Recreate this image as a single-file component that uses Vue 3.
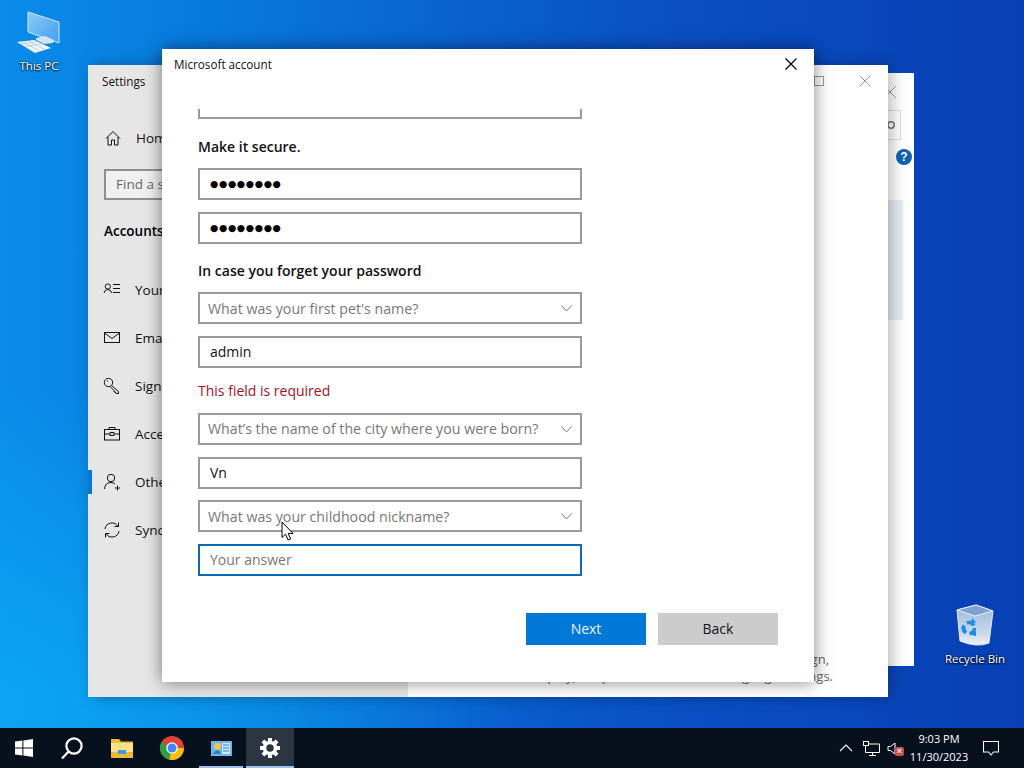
<script setup>
const navItems = [
  { label: 'Your info', icon: 'info' },
  { label: 'Email & accounts', icon: 'mail' },
  { label: 'Sign-in options', icon: 'key' },
  { label: 'Access work or school', icon: 'case' },
  { label: 'Other people', icon: 'people', active: true },
  { label: 'Sync your settings', icon: 'sync' }
]
const gearTeeth = [0, 45, 90, 135, 180, 225, 270, 315]
</script>

<template>
  <div class="desktop">
    <div class="desk-icon pc-icon">
      <svg width="48" height="44" viewBox="0 0 48 44">
        <defs>
          <linearGradient id="pcScreen" x1="0" y1="0" x2="1" y2="1">
            <stop offset="0" stop-color="#8ccbf8" />
            <stop offset="1" stop-color="#3f9fee" />
          </linearGradient>
        </defs>
        <path d="M13 1 L44 11 L44 32 L13 21 Z" fill="url(#pcScreen)" stroke="#cfe8fb" stroke-width="1" />
        <path d="M21 27 L30 25 L39 29 L38 32 L29 33 L21 29 Z" fill="#d5e3ef" />
        <path d="M2 31 L19 29 L36 37 L20 42 Z" fill="#f0f6fb" />
        <path d="M7 30.500 L24 39.500 M13 30 L30 38.500 M5 33 L22 31 M9 35.500 L26 33" stroke="#a9c6dc" stroke-width=".7" />
      </svg>
      <span>This PC</span>
    </div>
    <div class="desk-icon bin-icon">
      <svg width="40" height="44" viewBox="0 0 40 44">
        <defs>
          <linearGradient id="binBody" x1="0" y1="0" x2="0" y2="1">
            <stop offset="0" stop-color="#9db8da" />
            <stop offset=".7" stop-color="#c9d8e8" />
            <stop offset="1" stop-color="#f0f2f4" />
          </linearGradient>
        </defs>
        <path d="M2 6 L21 1 L38 7 L34 39 Q22 44 5 37 Z" fill="url(#binBody)" stroke="#dfeaf6" />
        <path d="M2 6 L21 1 L38 7 L20 12 Z" fill="#7ea2cf" stroke="#e6f0fa" />
        <circle cx="14" cy="24" r="5.500" fill="none" stroke="#1d8ce4" stroke-width="3.600" stroke-dasharray="8 3.500" />
        <path d="M17 14 L21 18 L16 20 Z M8 29 L6 23 L11 25 Z M21 27 L21 32 L16 31 Z" fill="#1d8ce4" />
      </svg>
      <span>Recycle Bin</span>
    </div>

    <section class="window back-window">
      <div class="back-close">
        <svg width="14" height="14" viewBox="0 0 14 14"><path d="M1 1 L13 13 M13 1 L1 13" stroke="#999" /></svg>
      </div>
      <div class="back-search">
        <svg width="10" height="10" viewBox="0 0 10 10" fill="none" stroke="#777" stroke-width="1.500"><circle cx="5" cy="5" r="3.200" /></svg>
      </div>
      <div class="help-badge">?</div>
      <div class="back-panel"></div>
    </section>

    <section class="window settings">
      <aside class="sidebar">
        <div class="app-title">Settings</div>
        <div class="home-row">
          <svg width="16" height="16" viewBox="0 0 16 16" fill="none" stroke="#111"><path d="M1 8.500 L8 1.500 L15 8.500 M3 7 V15 H6.500 V10 H9.500 V15 H13 V7" /></svg>
          <span>Home</span>
        </div>
        <div class="find-box">Find a setting</div>
        <div class="section-title">Accounts</div>
        <nav class="nav">
          <div v-for="item in navItems" :key="item.label" class="nav-item" :class="{ active: item.active }">
            <svg width="18" height="18" viewBox="0 0 18 18" fill="none" stroke="#111">
              <template v-if="item.icon === 'info'">
                <circle cx="4.800" cy="5.500" r="2.600" /><path d="M1 12 Q1.500 8.500 4.800 8.500 Q8 8.500 8.600 12 M10 3.500 H17 M10 7.500 H17 M10 11.500 H17" />
              </template>
              <template v-else-if="item.icon === 'mail'">
                <rect x="1.500" y="3.500" width="15" height="10" /><path d="M1.500 4 L9 9.500 L16.500 4" />
              </template>
              <template v-else-if="item.icon === 'key'">
                <circle cx="5.500" cy="5.500" r="4.200" /><path d="M8.500 8.500 L15.500 14.500 V16.500 H13 L12.500 15 H11 V13.500 L7.500 10 M4 4 H5" />
              </template>
              <template v-else-if="item.icon === 'case'">
                <rect x="1.500" y="4.500" width="15" height="10.500" /><path d="M6 4.500 V2.500 H12 V4.500 M1.500 9 H7 M11 9 H16.500 M7 7.500 H11 V10.500 H7 Z" />
              </template>
              <template v-else-if="item.icon === 'people'">
                <circle cx="8" cy="5" r="3.700" /><path d="M1.500 16 Q2 9.500 8 9.500 Q10.500 9.500 12 11 M12 15 H17 M14.500 12.500 V17.500" />
              </template>
              <template v-else>
                <path d="M2 8 A7 7 0 0 1 15 5.500 M16 10 A7 7 0 0 1 3 12.500 M15.500 1.500 V5.500 H11.500 M2.500 16.500 V12.500 H6.500" />
              </template>
            </svg>
            <span>{{ item.label }}</span>
          </div>
        </nav>
      </aside>
      <main class="settings-main">
        <div class="win-controls">
          <span class="max-box"></span>
          <svg width="12" height="12" viewBox="0 0 12 12"><path d="M.5 .5 L11.500 11.500 M11.500 .5 L.5 11.500" stroke="#999" /></svg>
        </div>
        <div class="main-note">
          <p class="note-first">Sign in with your Microsoft account to sync your design,</p>
          <p>Windows display, or specific browser and language settings.</p>
        </div>
      </main>
    </section>

    <section class="window dialog">
      <header class="dialog-head">
        <span>Microsoft account</span>
        <svg width="12" height="12" viewBox="0 0 12 12"><path d="M.5 .5 L11.500 11.500 M11.500 .5 L.5 11.500" stroke="#000" stroke-width="1.200" /></svg>
      </header>
      <div class="dialog-body">
        <div class="field clipped"></div>
        <h3 class="heading first">Make it secure.</h3>
        <div class="field dots">●●●●●●●●</div>
        <div class="field dots">●●●●●●●●</div>
        <h3 class="heading second">In case you forget your password</h3>
        <div class="field select">
          <span>What was your first pet's name?</span>
          <svg width="11" height="7" viewBox="0 0 11 7"><path d="M.5 .5 L5.500 6 L10.500 .5" fill="none" stroke="#777" /></svg>
        </div>
        <div class="field value">admin</div>
        <div class="error">This field is required</div>
        <div class="field select raised">
          <span>What’s the name of the city where you were born?</span>
          <svg width="11" height="7" viewBox="0 0 11 7"><path d="M.5 .5 L5.500 6 L10.500 .5" fill="none" stroke="#777" /></svg>
        </div>
        <div class="field value raised-value">Vn</div>
        <div class="field select tight">
          <span>What was your childhood nickname?</span>
          <svg width="11" height="7" viewBox="0 0 11 7"><path d="M.5 .5 L5.500 6 L10.500 .5" fill="none" stroke="#777" /></svg>
        </div>
        <div class="field focus">Your answer</div>
      </div>
      <footer class="dialog-foot">
        <button class="btn primary">Next</button>
        <button class="btn secondary">Back</button>
      </footer>
    </section>

    <svg class="cursor" width="14" height="21" viewBox="0 0 14 21">
      <path d="M1 1 V16.500 L4.600 13.200 L7 19 L9.600 18 L7.200 12.400 H12 Z" fill="#fff" stroke="#000" stroke-width="1" />
    </svg>

    <footer class="taskbar">
      <div class="task-left">
        <div class="task-btn">
          <svg width="18" height="18" viewBox="0 0 18 18" fill="#fff"><path d="M0 2.600 L7.400 1.600 V8.400 H0 Z M8.400 1.400 L18 0 V8.400 H8.400 Z M0 9.600 H7.400 V16.400 L0 15.400 Z M8.400 9.600 H18 V18 L8.400 16.600 Z" /></svg>
        </div>
        <div class="task-btn">
          <svg width="24" height="24" viewBox="0 0 24 24" fill="none" stroke="#fff" stroke-width="2.200"><circle cx="14" cy="10" r="7.600" /><path d="M8.600 15.400 L2 22.500" /></svg>
        </div>
        <div class="task-btn wide-gap">
          <svg width="22" height="19" viewBox="0 0 22 19"><path d="M0 0 H8 L10 2.500 H22 V19 H0 Z" fill="#e8b93a" /><path d="M0 4 H22 V13 H0 Z" fill="#ffe28a" /><path d="M7 11 H15 V15 H7 Z" fill="#3f9be0" /></svg>
        </div>
        <div class="task-btn wide-gap">
          <svg width="26" height="26" viewBox="0 0 26 26">
            <circle cx="13" cy="13" r="12" fill="#db4437" />
            <path d="M13 13 L25 13 A12 12 0 0 1 10 24.600 Z" fill="#f4c20d" />
            <path d="M13 13 L10 24.600 A12 12 0 0 1 2.600 7 Z" fill="#2f9e44" />
            <circle cx="13" cy="13" r="5.800" fill="#fff" /><circle cx="13" cy="13" r="4.500" fill="#4285f4" />
          </svg>
        </div>
        <div class="task-btn open small-gap">
          <svg width="21" height="15" viewBox="0 0 21 15"><rect width="21" height="15" fill="#6cb8ec" /><rect x="11" y="2" width="8" height="11" fill="#cfe9fb" /><circle cx="6.500" cy="5.500" r="3.400" fill="#f2c94c" /><path d="M2 13 Q6.500 5 10 13 Z" fill="#2f7fc4" /><path d="M12 4 H18 M12 7 H18 M12 10 H18" stroke="#2f7fc4" /></svg>
        </div>
        <div class="task-btn open current small-gap">
          <svg width="20" height="20" viewBox="0 0 20 20">
            <rect v-for="deg in gearTeeth" :key="deg" x="8" y="0" width="4" height="5" fill="#fff" :transform="`rotate(${deg} 10 10)`" />
            <circle cx="10" cy="10" r="5.500" fill="none" stroke="#fff" stroke-width="3.600" />
          </svg>
        </div>
      </div>
      <div class="tray">
        <svg width="14" height="8" viewBox="0 0 14 8"><path d="M1 7 L7 1 L13 7" fill="none" stroke="#fff" stroke-width="1.100" /></svg>
        <svg class="net" width="17" height="15" viewBox="0 0 17 15" fill="none" stroke="#fff"><rect x=".5" y=".5" width="5" height="4" /><path d="M5.500 3 H16.500 V11.500 H2.500 V4.500 M9.500 11.500 V14 M6 14.500 H13" /></svg>
        <span class="sound">
          <svg width="12" height="13" viewBox="0 0 12 13" fill="none" stroke="#fff"><path d="M1 4.500 H3.500 L8 1 V12 L3.500 8.500 H1 Z" /></svg>
          <span class="mute">×</span>
        </span>
        <div class="clock"><div>9:03 PM</div><div>11/30/2023</div></div>
        <svg class="notify" width="16" height="15" viewBox="0 0 16 15" fill="none" stroke="#fff" stroke-width="1.100"><path d="M.5 .5 H15.500 V11 H10.500 L8 14 L5.500 11 H.5 Z" /></svg>
      </div>
    </footer>
  </div>
</template>

<style scoped>
.desktop {
  position: relative;
  width: 1024px;
  height: 768px;
  overflow: hidden;
  font-family: "Open Sans", "Noto Sans", sans-serif;
  background:
    radial-gradient(520px 320px at 0% 92%, rgba(12, 170, 245, .85), rgba(12, 170, 245, 0)),
    linear-gradient(90deg, #0a8cea 0%, #0878dc 22%, #0a52c6 62%, #083fb4 100%);
}
.desk-icon {
  position: absolute;
  display: flex;
  flex-direction: column;
  align-items: center;
  color: #fff;
  font-size: 11.5px;
  text-shadow: 0 1px 2px #000, 0 0 2px rgba(0, 0, 0, .8);
}
.pc-icon { left: 16px; top: 11px; width: 46px; }
.pc-icon span { white-space: nowrap; margin-top: 3px; }
.bin-icon { left: 940px; top: 604px; width: 70px; }
.bin-icon span { white-space: nowrap; margin-top: 3px; }

.window { position: absolute; background: #fff; }
.back-window { left: 700px; top: 73px; width: 214px; height: 593px; }
.back-close { position: absolute; right: 16px; top: 9px; margin-right: 1px; }
.back-search {
  position: absolute; left: 101px; top: 37px; width: 100px; height: 30px; border: 1px solid #ddd; box-sizing: border-box;
  display: flex; align-items: center; justify-content: flex-start; padding-left: 84px;
}
.help-badge {
  position: absolute; left: 196px; top: 76px; width: 16px; height: 16px; border-radius: 50%;
  background: #0f62b0; color: #fff; font: bold 12px/16px "Liberation Sans", sans-serif; text-align: center;
}
.back-panel { position: absolute; left: 100px; top: 127px; width: 103px; height: 120px; background: linear-gradient(90deg, #dbe6f0, #e6eef5); }

.settings {
  left: 88px; top: 65px; width: 800px; height: 632px;
  display: flex;
  box-shadow: 4px 0 14px rgba(0, 0, 0, .28);
}
.sidebar { width: 320px; background: #e6e6e6; position: relative; }
.app-title { padding: 7px 0 0 14px; height: 27px; font-size: 11.7px; line-height: 18px; color: #111; }
.home-row { display: flex; align-items: center; gap: 15px; margin: 29px 0 0 17px; height: 20px; font-size: 13.5px; color: #111; }
.find-box {
  margin: 21px 0 0 16px; width: 280px; height: 31px; box-sizing: border-box;
  border: 2px solid #8f8f8f; background: #f0f0f0; padding-left: 10px; font-size: 13.5px; line-height: 26px; color: #666;
}
.section-title { margin: 21px 0 0 16px; font-size: 13.5px; font-weight: 600; line-height: 20px; color: #000; }
.nav { margin-top: 25px; }
.nav-item { position: relative; display: flex; align-items: center; gap: 14px; height: 48px; padding-left: 15px; font-size: 13.5px; color: #111; white-space: nowrap; }
.nav-item.active::before { content: ""; position: absolute; left: 0; top: 12px; width: 4px; height: 24px; background: #0078d7; }
.settings-main { flex: 1; position: relative; }
.win-controls { position: absolute; right: 17px; top: 10px; display: flex; align-items: center; gap: 35px; }
.max-box { width: 10px; height: 10px; border: 1px solid #999; box-sizing: border-box; }
.main-note { position: absolute; left: 40px; top: 586px; width: 385px; text-align: right; font-size: 13px; line-height: 17px; color: #666; }
.main-note p { margin: 0; white-space: nowrap; }
.main-note .note-first { margin-right: 4px; }

.dialog {
  left: 162px; top: 49px; width: 652px; height: 633px;
  display: flex; flex-direction: column;
  box-shadow: 0 0 16px rgba(0, 0, 0, .5);
}
.dialog-head {
  display: flex; align-items: center; justify-content: space-between;
  height: 60px; flex: none; box-sizing: border-box; padding: 0 17px 30px 12px;
  font-size: 11.7px; color: #111;
}
.dialog-body { flex: 1; min-height: 0; padding: 0 232px 0 36px; display: flex; flex-direction: column; gap: 12px; }
.heading { margin: 0; font-size: 14px; line-height: 20px; font-weight: 600; color: #111; }
.heading.first { margin: 6px 0 -1px; }
.heading.second { margin: 5px 0 -1px; }
.field {
  flex: none; height: 32px; box-sizing: border-box; border: 2px solid #999; background: #fff;
  font-size: 14.2px; line-height: 28px; padding-left: 8px; white-space: nowrap;
}
.field.clipped { height: 10px; border-top: 0; }
.field.dots { font-family: "DejaVu Sans", sans-serif; font-size: 9.5px; color: #000; letter-spacing: .65px; padding-left: 10px; }
.field.value { color: #111; padding-left: 10px; font-size: 14px; }
.field.select { display: flex; align-items: center; justify-content: space-between; padding: 1px 8px 0 8px; color: #777; }
.field.select.raised { padding-top: 0; }
.field.raised-value { line-height: 27px; }
.field.tight { margin-top: -1px; }
.field.focus { border-color: #0a6bb5; color: #777; padding-left: 10px; font-size: 14px; }
.error { margin-top: 1px; font-size: 14px; line-height: 20px; color: #a80f22; }
.dialog-foot { flex: none; display: flex; justify-content: flex-end; gap: 12px; padding: 0 36px 37px 0; }
.btn { width: 120px; height: 32px; border: 0; font-family: inherit; font-size: 14px; padding: 0 0 2px; }
.btn.primary { background: #0078d7; color: #e8f6ff; }
.btn.secondary { background: #ccc; color: #111; }

.cursor { position: absolute; left: 281px; top: 521px; }

.taskbar {
  position: absolute; left: 0; right: 0; bottom: 0; height: 40px;
  display: flex; justify-content: space-between;
  background: #07101d;
}
.task-left { display: flex; }
.task-btn { position: relative; width: 48px; height: 40px; display: flex; align-items: center; justify-content: center; }
.task-btn.wide-gap { margin-left: 2px; }
.task-btn.small-gap { margin-left: 1px; }
.task-btn.open::after { content: ""; position: absolute; left: 2px; right: 2px; bottom: 0; height: 2px; background: #99c4ee; }
.task-btn.current { background: #2c3640; }
.task-btn.current::after { left: 0; right: 0; }
.tray { display: flex; align-items: center; position: relative; color: #fff; }
.net { margin-left: 10px; }
.sound { position: relative; display: flex; margin-left: 7px; }
.mute {
  position: absolute; left: 8px; top: 5px; width: 9px; height: 9px; border-radius: 2px; background: #c8504c;
  color: #fbe4e2; font: bold 9px/9px "Liberation Sans", sans-serif; text-align: center;
}
.clock { width: 74px; margin-left: 3px; text-align: center; font-size: 11px; line-height: 18px; color: #fff; }
.notify { margin: 0 25px 0 7px; }
</style>
